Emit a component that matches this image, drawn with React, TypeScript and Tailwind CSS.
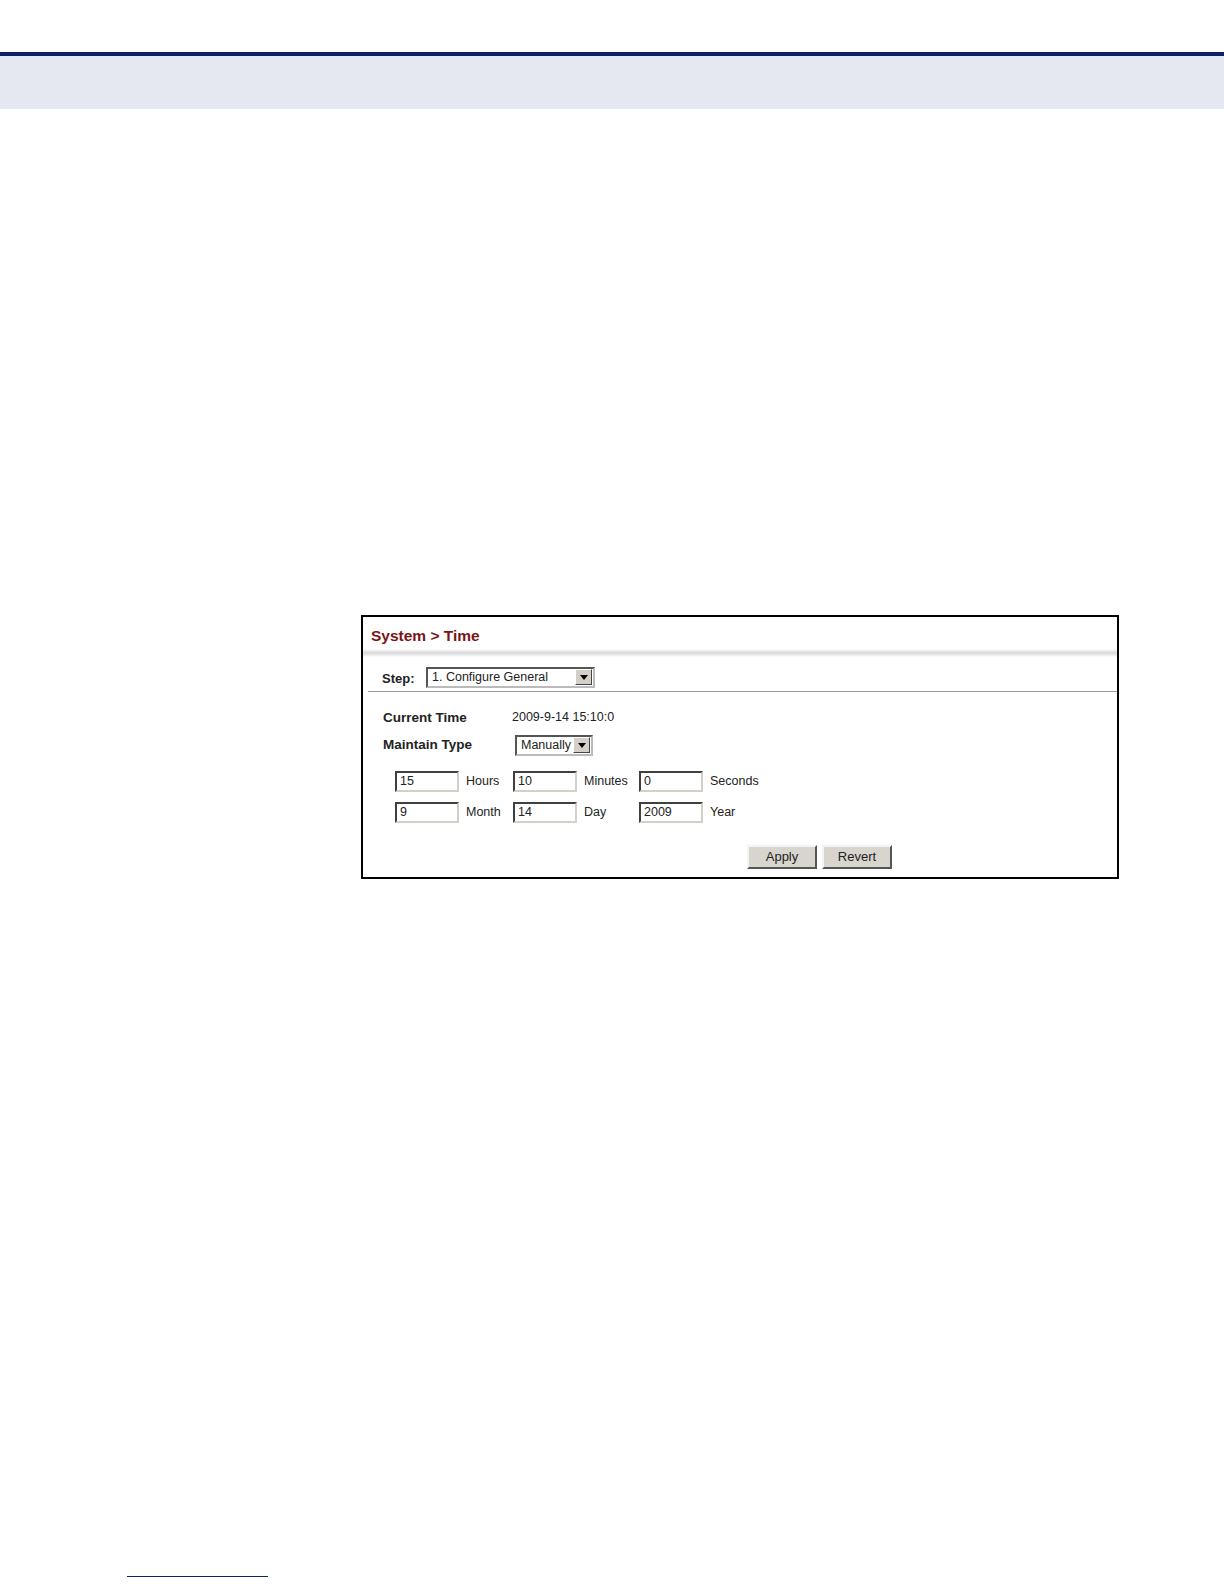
import React from "react";

const font = { fontFamily: '"Liberation Sans", Arial, sans-serif' };

function Arrow() {
  return (
    <svg width="8" height="5" viewBox="0 0 8 5">
      <path d="M0 0h8L4 5z" fill="#000" />
    </svg>
  );
}

function Select({ label, width }: { label: string; width: string }) {
  return (
    <div
      className={`flex h-[21px] items-center border-2 border-t-[#555] border-l-[#555] border-b-[#bbb] border-r-[#bbb] bg-white pl-[4px] pr-[1px] ${width}`}
    >
      <span className="flex-1 text-[12.5px] leading-none text-[#222]">{label}</span>
      <span className="flex h-[16px] w-[17px] items-center justify-center border border-t-white border-l-white border-b-[#444] border-r-[#444] bg-[#d4d0c8]">
        <Arrow />
      </span>
    </div>
  );
}

function Field({ value }: { value: string }) {
  return (
    <div className="flex h-[21px] w-[64px] items-center border-2 border-t-[#404040] border-l-[#404040] border-b-[#d4d0c8] border-r-[#d4d0c8] bg-white pl-[3px] text-[12.5px] leading-none text-[#222]">
      {value}
    </div>
  );
}

function Btn({ label }: { label: string }) {
  return (
    <button className="flex h-[24px] w-[70px] items-center justify-center border-2 border-t-[#f4f4f4] border-l-[#f4f4f4] border-b-[#555] border-r-[#555] bg-[#d8d5ce] text-[13px] text-[#222]">
      {label}
    </button>
  );
}

const rows = [
  [
    ["15", "Hours"],
    ["10", "Minutes"],
    ["0", "Seconds"],
  ],
  [
    ["9", "Month"],
    ["14", "Day"],
    ["2009", "Year"],
  ],
];

export default function App() {
  return (
    <div className="min-h-[1584px] w-full bg-white" style={font}>
      <div className="h-[52px]" />
      <div className="h-[4px] bg-[#0b2362]" />
      <div className="h-[53px] bg-[#e5e8f0]" />

      <div className="ml-[361px] mt-[506px] h-[264px] w-[758px] border-2 border-black bg-white">
        <div className="pl-[8px] pt-[9px] text-[15.5px] font-bold leading-[20px] text-[#7b1416]">
          System &gt; Time
        </div>
        <div className="mt-[3px] h-[8px] bg-gradient-to-b from-white via-[#d8d8d8] to-white" />

        <div className="mt-[9px] flex items-center pl-[19px]">
          <span className="w-[44px] pt-[3px] text-[13px] font-bold text-[#222]">Step:</span>
          <Select label="1. Configure General" width="w-[169px]" />
        </div>
        <div className="ml-[5px] mt-[2px] h-px bg-[#999]" />

        <div className="mt-[16px] flex items-center pl-[20px] text-[13.5px] text-[#222]">
          <span className="w-[129px] font-bold">Current Time</span>
          <span className="text-[12.5px]">2009-9-14 15:10:0</span>
        </div>
        <div className="mt-[7px] flex items-center pl-[20px] text-[13.5px] text-[#222]">
          <span className="w-[132px] font-bold">Maintain Type</span>
          <Select label="Manually" width="w-[78px]" />
        </div>

        <div className="mt-[15px] flex flex-col gap-[10px] pl-[32px]">
          {rows.map((row, i) => (
            <div key={i} className="flex items-center text-[12.5px] text-[#222]">
              {row.map(([v, l], j) => (
                <div key={j} className={`flex items-center ${j === 0 ? "w-[118px]" : j === 1 ? "w-[126px]" : ""}`}>
                  <Field value={v} />
                  <span className="ml-[7px]">{l}</span>
                </div>
              ))}
            </div>
          ))}
        </div>

        <div className="mt-[22px] flex gap-[5px] pl-[384px]">
          <Btn label="Apply" />
          <Btn label="Revert" />
        </div>
      </div>

      <div className="ml-[127px] mt-[697px] h-px w-[141px] bg-[#0b2362]" />
    </div>
  );
}
